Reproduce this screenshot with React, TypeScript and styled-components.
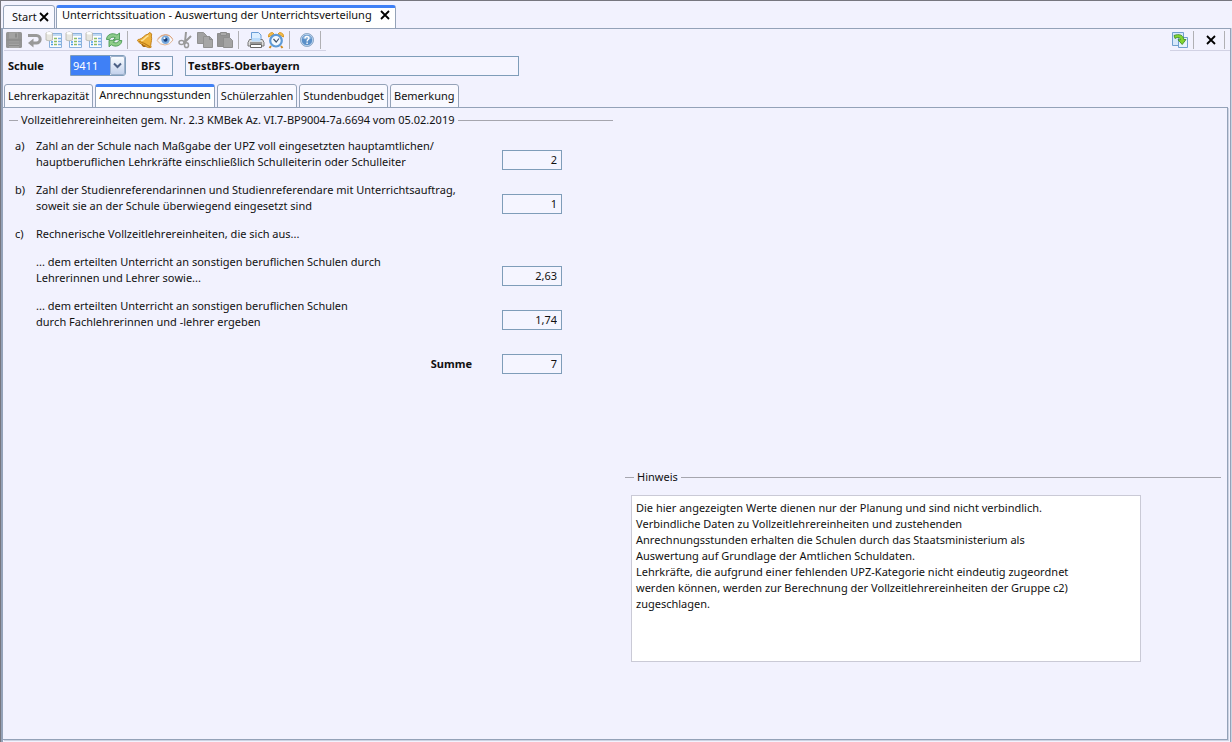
import React from "react";
import styled, { createGlobalStyle, css } from "styled-components";

const c = {
  bg: "#f2f2fe",
  field: "#f5f5ff",
  frame: "#94a2b8",
  shade: "#cdd3e2",
  input: "#7f9db9",
  accent: "#3f80f6",
  text: "#111111",
};

const GlobalStyle = createGlobalStyle`
  * { box-sizing: border-box; }
  body { margin: 0; background: ${c.bg}; }
  body, button, input, select, textarea {
    font-family: "Noto Sans", sans-serif;
    font-size: 11px;
    font-kerning: none;
    line-height: 16px;
    color: ${c.text};
  }
`;

const Window = styled.div`
  min-height: 100vh;
  display: flex;
  flex-direction: column;
  border-top: 1px solid #77777f;
  border-left: 1px solid #77777f;
  padding-top: 4px;
`;

const TabStrip = styled.div`
  display: flex;
  gap: 2px;
  padding-left: 1px;
  margin-bottom: -1px;
`;

const DocumentTabs = styled(TabStrip)`
  gap: 1px;
  padding-left: 2px;
`;

const tabShape = css<{ $active?: boolean }>`
  height: 24px;
  border: 1px solid ${c.frame};
  border-radius: 3px 3px 0 0;
  background: ${(p) => (p.$active ? "#ffffff" : "#f9f9ff")};
  white-space: nowrap;
  ${(p) => p.$active && `border-top: 3px solid ${c.accent};`}
`;

const DocumentTab = styled.div<{ $active?: boolean }>`
  ${tabShape}
  display: flex;
  align-items: center;
  justify-content: space-between;
  gap: 2px;
  min-width: ${(p) => (p.$active ? "340px" : "52px")};
  padding: ${(p) => (p.$active ? "0 5px 6px 5px" : "0 5px 0 8px")};
`;

const TabLabel = styled.button`
  border: 0;
  padding: 0;
  background: none;
`;

const CloseButton = styled.button`
  display: flex;
  border: 0;
  padding: 0;
  background: none;
`;

const DocumentPane = styled.main`
  flex: 1;
  display: flex;
  flex-direction: column;
  margin-right: 1px;
  border: solid ${c.frame};
  border-width: 1px 1px 0 2px;
  box-shadow: 1px 0 0 ${c.shade};
`;

const ToolbarRow = styled.div`
  display: flex;
  justify-content: space-between;
  padding: 1px 0 0 1px;
`;

const Toolbar = styled.div`
  display: flex;
  height: 21px;
  border-bottom: 1px solid #d2d2e4;
`;

const ToolButton = styled.button`
  width: 20px;
  height: 20px;
  display: flex;
  align-items: center;
  justify-content: center;
  border: 0;
  padding: 0;
  background: none;
`;

const Separator = styled.span`
  width: 1px;
  height: 18px;
  margin: 1px 7px 0 3px;
  background: #b0b0b4;

  &:last-child {
    margin-right: 5px;
  }
`;

const SchoolForm = styled.div`
  display: flex;
  align-items: center;
  padding: 4px 5px 8px;
`;

const SchoolLabel = styled.label`
  width: 62px;
  font-weight: bold;
`;

const Combo = styled.span`
  display: flex;
  position: relative;
  width: 56px;
  height: 21px;
  margin-right: 12px;
  border: 1px solid ${c.input};
  border-radius: 0 3px 3px 0;
  background: #e4ebf8;
`;

const ComboSelect = styled.select`
  appearance: none;
  width: 100%;
  border: 0;
  padding: 0 16px 0 2px;
  color: #ffffff;
  background: linear-gradient(to right, ${c.accent} 39px, #e4ebf8 39px);
  border-radius: 0 3px 3px 0;
`;

const ComboArrow = styled.span`
  position: absolute;
  right: 0;
  top: 0;
  bottom: 0;
  width: 15px;
  display: flex;
  align-items: center;
  justify-content: center;
  border: 1px solid #9db0cc;
  border-radius: 2px;
  background: linear-gradient(#fafcff, #c3d2ec);
  pointer-events: none;
`;

const TextField = styled.input<{ $wide?: boolean }>`
  width: ${(p) => (p.$wide ? "334px" : "35px")};
  height: 20px;
  margin-right: 12px;
  padding: 0 2px;
  border: 1px solid ${c.input};
  background: ${c.field};
  font-weight: bold;
`;

const PageTab = styled.button<{ $active?: boolean }>`
  ${tabShape}
  padding: ${(p) => (p.$active ? "0 3px 5px" : "0 3px")};
`;

const Page = styled.section`
  flex: 1;
  display: grid;
  grid-template-columns: 151fr 149fr;
  gap: 12px;
  margin: 0 2px 2px 0;
  padding: 4px 6px 0;
  border: 1px solid ${c.frame};
  border-left: 0;
  box-shadow: 1px 1px 0 ${c.shade};
`;

const Group = styled.fieldset<{ $lower?: boolean }>`
  min-width: 0;
  margin: ${(p) => (p.$lower ? "357px 0 0" : "0")};
  padding: 0;
  border: 0;
  border-top: 1px solid #a6a6ae;
  align-self: start;
`;

const GroupTitle = styled.legend`
  margin-left: 9px;
  padding: 0 3px;
`;

const Entries = styled.div`
  display: grid;
  grid-template-columns: 21px 466px 60px;
  row-gap: 12px;
  padding: 10px 0 0 6px;
`;

const EntryLabel = styled.label<{ $total?: boolean }>`
  grid-column: 2;
  min-height: 16px;
  ${(p) =>
    p.$total &&
    css`
      padding: 14px 30px 2px 0;
      text-align: right;
      font-weight: bold;
    `}
`;

const Marker = styled.span`
  grid-column: 1;
`;

const NumberField = styled.input`
  grid-column: 3;
  align-self: end;
  height: 20px;
  width: 60px;
  padding: 0 4px 2px;
  border: 1px solid ${c.input};
  background: ${c.field};
  text-align: right;
`;

const Note = styled.textarea`
  display: block;
  width: 510px;
  max-width: 100%;
  height: 167px;
  margin: 10px 0 0 6px;
  padding: 4px 50px 4px 4px;
  border: 1px solid #cacad6;
  background: #ffffff;
  resize: none;
  overflow: hidden;
`;

const Svg = ({ children }: { children: React.ReactNode }) => (
  <svg width="18" height="18" viewBox="0 0 18 18" fill="none" aria-hidden="true">
    {children}
  </svg>
);

const CrossIcon = () => (
  <svg width="10" height="10" viewBox="0 0 10 10" aria-hidden="true">
    <path d="M1 1 9 9M9 1 1 9" stroke="#000" strokeWidth="1.800" />
  </svg>
);

const SaveIcon = () => (
  <Svg>
    <path d="M1 2.500Q1 1 2.500 1h13Q17 1 17 2.500v13q0 1.500-1.500 1.500h-13Q1 17 1 15.500z" fill="#949494" />
    <path d="M4 1.500h9v6H4zM4 10.500h10V17H4z" fill="#a3a3a3" />
    <path d="M1.500 9h15M4 12h10M4 14.500h10" stroke="#8a8a8a" />
    <path d="M10 2.500h2v4h-2z" fill="#8a8a8a" />
  </Svg>
);

const UndoIcon = () => (
  <Svg>
    <path d="M3 4.500h8.500a3.700 3.700 0 0 1 0 7.400H7" stroke="#999" strokeWidth="3" />
    <path d="M8.500 7.500v9L3 12z" fill="#999" />
  </Svg>
);

const TableIcon = () => (
  <Svg>
    <path d="M4.500 2.500h12v14h-12z" fill="#fbfdff" stroke="#8bb1dc" />
    <path d="M7 3h9v2H7z" fill="#c0d9f3" />
    <path d="M6 11h2M6 13.500h2" stroke="#4c9be4" strokeWidth="1.300" />
    <path d="M9 7.500h3M9 10.500h3M9 13.500h3" stroke="#8fbd62" strokeWidth="1.300" />
    <path d="M13 7.500h3M13 10.500h3M13 13.500h3" stroke="#78aee5" strokeWidth="1.300" />
    <path d="M1 2Q4-.2 7.500 2v7q-3.500 1.700-6.500 0z" fill="#e6e5df" stroke="#b5b4aa" strokeWidth=".8" />
    <ellipse cx="4.200" cy="2.300" rx="2.800" ry="1.200" fill="#fff" />
  </Svg>
);

const RefreshIcon = () => (
  <Svg>
    <path d="M1.500 8.500C1.500 3.500 7.500 1 12 4l2.500-2v6.700H8.300l2-2C7.500 5.500 5.500 6.300 4.500 8.500z" fill="#8ccb8b" stroke="#3c9248" strokeWidth=".8" />
    <path d="M16.800 9.500c0 5-6 7.300-10.500 4.300l-2.300 2V9.300h6.200l-2 2c2.800 1.200 4.900.4 5.800-1.800z" fill="#8fce88" stroke="#3c9248" strokeWidth=".8" />
  </Svg>
);

const BellIcon = () => (
  <Svg>
    <path d="M13.500 1.500c2.300.6 2.600 2.300 1.800 3.500 1 3-.3 5.800-.6 9.500l.5 1.700c-1.700 1-3.700.2-5.300-.7-3-1.700-6-2.700-8.200-5.400-.5-1.200.4-1.800 1.700-1.800C7 7.500 8.500 3.500 12 3.200z" fill="#eeb23b" stroke="#bd7b15" strokeWidth=".9" />
    <path d="M12.500 4.500C9 6 8.500 9 5 10" stroke="#ffe398" strokeWidth="1.500" />
    <path d="M3 10.200c4 1.300 8 3.300 11 5.500" stroke="#bd7b15" strokeWidth="1.200" />
    <path d="M6 13q1 3 3.500 2" stroke="#a7660e" strokeWidth="1.500" />
  </Svg>
);

const EyeIcon = () => (
  <Svg>
    <path d="M1 9.500Q4.500 4 9.500 4T17 9q-3 5-8 5-5 0-8-4.500z" fill="#f5f7fb" stroke="#e2b696" />
    <path d="M1.500 8Q5 3.500 9.500 3.500T16.500 7.500" stroke="#dba47f" />
    <circle cx="9.500" cy="8.700" r="4.200" fill="#75a7dc" />
    <circle cx="9.500" cy="8.700" r="2" fill="#173e78" />
    <circle cx="8.500" cy="7.300" r="1" fill="#fff" />
  </Svg>
);

const CutIcon = () => (
  <Svg>
    <path d="M10 1 9 11M15 5 8 12" stroke="#999" strokeWidth="2" />
    <ellipse cx="5.500" cy="11.500" rx="2.500" ry="2" stroke="#999" strokeWidth="1.500" />
    <ellipse cx="10.500" cy="14.200" rx="2" ry="2.400" stroke="#999" strokeWidth="1.500" />
  </Svg>
);

const CopyIcon = () => (
  <Svg>
    <path d="M1.500 1.500h6l3 3v8h-9z" fill="#a1a1a1" stroke="#919191" />
    <path d="M7.500 5.500h6l3 3v8h-9z" fill="#a6a6a6" stroke="#919191" />
    <path d="M13.500 5.500v3h3" stroke="#8b8b8b" />
  </Svg>
);

const PasteIcon = () => (
  <Svg>
    <path d="M1.500 2.500h12v13h-12z" fill="#949494" stroke="#8c8c8c" />
    <path d="M4.500 1.500h6v3h-6z" fill="#aaa" stroke="#8c8c8c" />
    <path d="M7.500 6.500h6l3 3v7h-9z" fill="#a4a4a4" stroke="#8e8e8e" />
  </Svg>
);

const PrintIcon = () => (
  <Svg>
    <path d="M4.500 9.500v-8h7l2.500 2.500v5.500z" fill="#dceeff" stroke="#6a9dd6" />
    <path d="M2.500 8.500h13l1.500 3v3.500H1v-3.500z" fill="#ddd" stroke="#777" />
    <path d="M4.500 7h9v3.500h-9z" fill="#b9dafa" />
    <path d="M3.500 13.500h11v3h-11z" fill="#fff" stroke="#666" />
    <path d="M3 12h12" stroke="#555" />
  </Svg>
);

const ClockIcon = () => (
  <Svg>
    <path d="M4 15 2.500 17M14 15l1.500 2" stroke="#cf8c22" strokeWidth="2" />
    <path d="M1.500 6Q1 2 5.500 1.500L7 3zM16.500 6Q17 2 12.500 1.500L11 3z" fill="#f6bf49" stroke="#d99925" />
    <circle cx="9" cy="9.700" r="5.800" fill="#f3f9ff" stroke="#5e9ad6" strokeWidth="2.200" />
    <path d="m6.500 8 2.700 3L12 7.500" stroke="#42566f" strokeWidth="1.200" />
  </Svg>
);

const HelpIcon = () => (
  <Svg>
    <circle cx="9" cy="9" r="6.500" fill="#5a8fc8" stroke="#8fa9c6" strokeWidth="1" />
    <circle cx="9" cy="9" r="5.700" stroke="#c4d8ee" strokeWidth=".9" />
    <path d="M4.300 7.500a4.900 4.500 0 0 1 9.400 0q-4.700 2-9.400 0z" fill="#86afd9" />
    <path d="M7 7.400c0-2.700 4-2.500 3.900-.2C10.800 8.500 9.100 8.700 9.100 10.400M9.100 11.500V13" stroke="#fff" strokeWidth="1.400" />
  </Svg>
);

const SwitchIcon = () => (
  <Svg>
    <path d="M1.500 1.500h11v13h-11z" fill="#d7e8fa" stroke="#719fce" />
    <path d="M7.500 6.500h9v10h-9z" fill="#e8f3fd" stroke="#719fce" />
    <path d="M3 4.500c5-2 9.500-.5 9.800 4H15l-3.800 5L7 8.700h2.500C9.300 6.500 6.500 5.700 4 7.500z" fill="#83d52f" stroke="#37851c" strokeWidth=".8" />
  </Svg>
);

const editTools = [
  { label: "Speichern", Icon: SaveIcon, disabled: true },
  { label: "Rückgängig", Icon: UndoIcon, disabled: true },
  { label: "Tabelle 1", Icon: TableIcon },
  { label: "Tabelle 2", Icon: TableIcon },
  { label: "Tabelle 3", Icon: TableIcon },
  { label: "Aktualisieren", Icon: RefreshIcon },
];
const clipboardTools = [
  { label: "Wiedervorlage", Icon: BellIcon },
  { label: "Ansicht", Icon: EyeIcon },
  { label: "Ausschneiden", Icon: CutIcon, disabled: true },
  { label: "Kopieren", Icon: CopyIcon, disabled: true },
  { label: "Einfügen", Icon: PasteIcon, disabled: true },
];
const outputTools = [
  { label: "Drucken", Icon: PrintIcon },
  { label: "Termin", Icon: ClockIcon },
];
const helpTools = [{ label: "Hilfe", Icon: HelpIcon }];
const toolGroups = [editTools, clipboardTools, outputTools, helpTools];

const pageTabs = ["Lehrerkapazität", "Anrechnungsstunden", "Schülerzahlen", "Stundenbudget", "Bemerkung"];

const entries: { id: string; marker?: string; lines: string[]; value?: string; total?: boolean }[] = [
  {
    id: "a",
    marker: "a)",
    lines: [
      "Zahl an der Schule nach Maßgabe der UPZ voll eingesetzten hauptamtlichen/",
      "hauptberuflichen Lehrkräfte einschließlich Schulleiterin oder Schulleiter",
    ],
    value: "2",
  },
  {
    id: "b",
    marker: "b)",
    lines: [
      "Zahl der Studienreferendarinnen und Studienreferendare mit Unterrichtsauftrag,",
      "soweit sie an der Schule überwiegend eingesetzt sind",
    ],
    value: "1",
  },
  { id: "c", marker: "c)", lines: ["Rechnerische Vollzeitlehrereinheiten, die sich aus..."] },
  {
    id: "c1",
    lines: ["... dem erteilten Unterricht an sonstigen beruflichen Schulen durch", "Lehrerinnen und Lehrer sowie..."],
    value: "2,63",
  },
  {
    id: "c2",
    lines: ["... dem erteilten Unterricht an sonstigen beruflichen Schulen", "durch Fachlehrerinnen und -lehrer ergeben"],
    value: "1,74",
  },
  { id: "sum", lines: ["Summe"], value: "7", total: true },
];

const noteText = `Die hier angezeigten Werte dienen nur der Planung und sind nicht verbindlich.
Verbindliche Daten zu Vollzeitlehrereinheiten und zustehenden
Anrechnungsstunden erhalten die Schulen durch das Staatsministerium als
Auswertung auf Grundlage der Amtlichen Schuldaten.
Lehrkräfte, die aufgrund einer fehlenden UPZ-Kategorie nicht eindeutig zugeordnet
werden können, werden zur Berechnung der Vollzeitlehrereinheiten der Gruppe c2)
zugeschlagen.`;

export default function App() {
  return (
    <>
      <GlobalStyle />
      <Window>
        <DocumentTabs>
          <DocumentTab>
            <TabLabel>Start</TabLabel>
            <CloseButton aria-label="Start schließen">
              <CrossIcon />
            </CloseButton>
          </DocumentTab>
          <DocumentTab $active>
            <TabLabel>Unterrichtssituation - Auswertung der Unterrichtsverteilung</TabLabel>
            <CloseButton aria-label="Unterrichtssituation schließen">
              <CrossIcon />
            </CloseButton>
          </DocumentTab>
        </DocumentTabs>
        <DocumentPane>
          <ToolbarRow>
            <Toolbar>
              {toolGroups.map((group, i) => (
                <React.Fragment key={i}>
                  {group.map(({ label, Icon, disabled }: { label: string; Icon: React.FC; disabled?: boolean }) => (
                    <ToolButton key={label} aria-label={label} disabled={disabled}>
                      <Icon />
                    </ToolButton>
                  ))}
                  <Separator />
                </React.Fragment>
              ))}
            </Toolbar>
            <Toolbar>
              <ToolButton aria-label="Fenster wechseln">
                <SwitchIcon />
              </ToolButton>
              <Separator />
              <ToolButton aria-label="Schließen">
                <CrossIcon />
              </ToolButton>
              <Separator />
            </Toolbar>
          </ToolbarRow>
          <SchoolForm>
            <SchoolLabel htmlFor="school">Schule</SchoolLabel>
            <Combo>
              <ComboSelect id="school" defaultValue="9411">
                <option>9411</option>
              </ComboSelect>
              <ComboArrow>
                <svg width="9" height="7" viewBox="0 0 9 7" aria-hidden="true">
                  <path d="m1 1.500 3.500 3.500L8 1.500" fill="none" stroke="#4d6185" strokeWidth="2" />
                </svg>
              </ComboArrow>
            </Combo>
            <TextField aria-label="Schulart" readOnly value="BFS" />
            <TextField $wide aria-label="Schulname" readOnly value="TestBFS-Oberbayern" />
          </SchoolForm>
          <TabStrip role="tablist">
            {pageTabs.map((name) => {
              const active = name === "Anrechnungsstunden";
              return (
                <PageTab key={name} role="tab" aria-selected={active} $active={active}>
                  {name}
                </PageTab>
              );
            })}
          </TabStrip>
          <Page>
            <Group>
              <GroupTitle>Vollzeitlehrereinheiten gem. Nr. 2.3 KMBek Az. VI.7-BP9004-7a.6694 vom 05.02.2019</GroupTitle>
              <Entries>
                {entries.map((e) => (
                  <React.Fragment key={e.id}>
                    {e.marker && <Marker>{e.marker}</Marker>}
                    <EntryLabel htmlFor={e.value ? e.id : undefined} $total={e.total}>
                      {e.lines.map((line, i) => (
                        <React.Fragment key={line}>
                          {i > 0 && <br />}
                          {line}
                        </React.Fragment>
                      ))}
                    </EntryLabel>
                    {e.value && <NumberField id={e.id} readOnly value={e.value} />}
                  </React.Fragment>
                ))}
              </Entries>
            </Group>
            <Group $lower>
              <GroupTitle>Hinweis</GroupTitle>
              <Note aria-label="Hinweis" readOnly value={noteText} />
            </Group>
          </Page>
        </DocumentPane>
      </Window>
    </>
  );
}
